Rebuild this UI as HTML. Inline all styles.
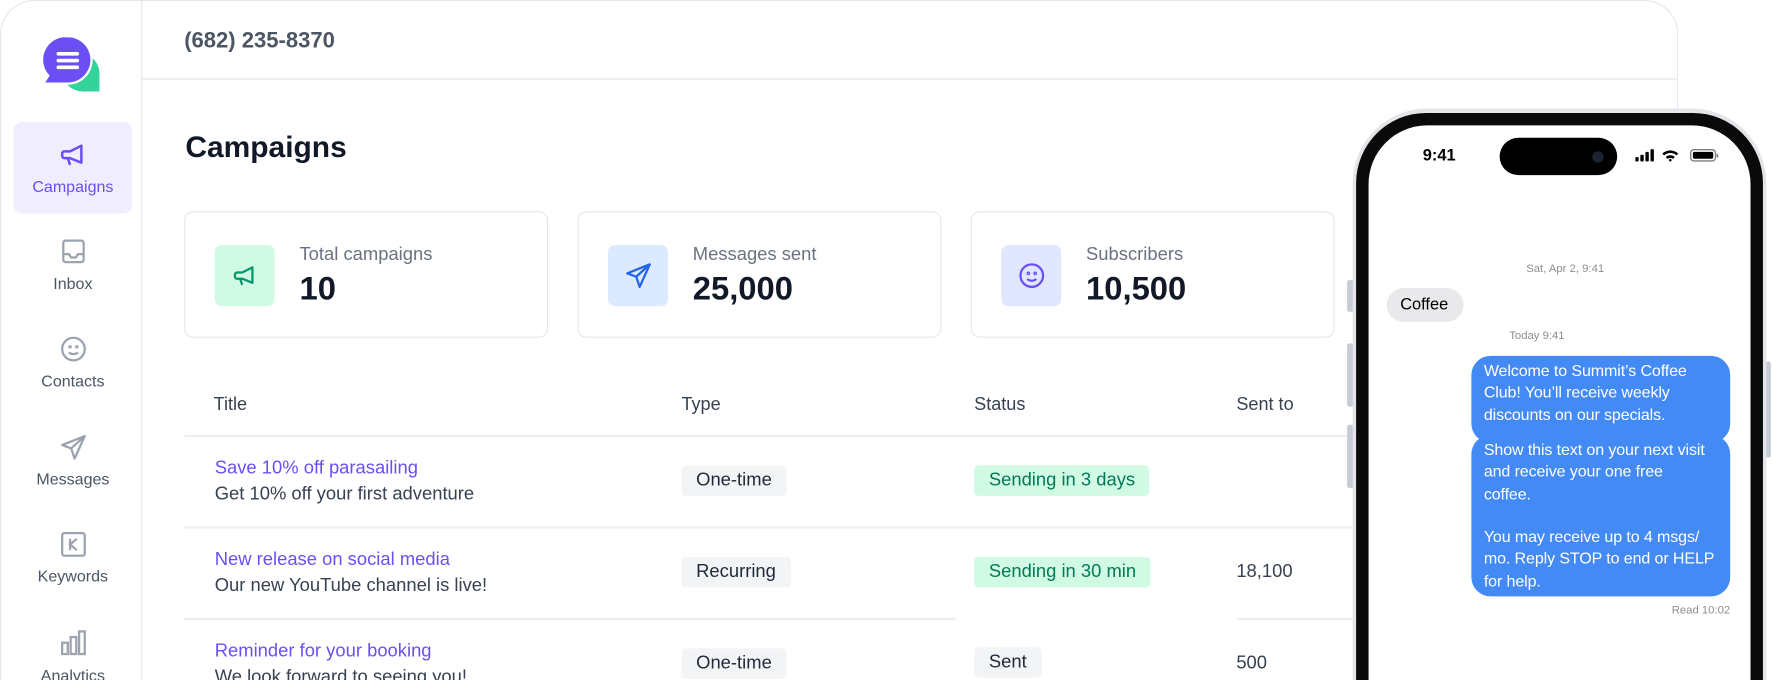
<!DOCTYPE html>
<html><head><meta charset="utf-8"><style>
*{box-sizing:border-box;margin:0;padding:0}
html,body{width:1772px;height:680px;overflow:hidden;background:#fff;font-family:"Liberation Sans",sans-serif}
#w{position:absolute;left:0;top:0;width:1568px;height:602px;overflow:hidden;transform:scale(1.1301,1.1296);transform-origin:0 0}
.a{position:absolute}
.card{left:0;top:0;width:1485px;height:602px;border:1.5px solid #e5e7eb;border-bottom:none;border-radius:30px 30px 0 0;background:#fff}
.side{left:125px;top:0;width:1px;height:602px;background:#e5e7eb}
.nav{left:12px;width:105px;text-align:center;font-size:14.2px;color:#4b5563}
.nav svg{display:block;margin:0 auto 10px}
.lbl{font-size:16.3px;color:#6b7280}
.val{font-size:29px;font-weight:bold;color:#111827}
.stat{top:187px;width:322px;height:112px;border:1.5px solid #e5e7eb;border-radius:8px}
.ib{left:26px;top:29px;width:53px;height:54px;border-radius:6px;display:flex;align-items:center;justify-content:center}
.th{top:350px;font-size:16px;color:#374151}
.ln{height:1.5px;background:#eceef1}
.t1{font-size:16.3px;color:#6a4ff6}
.t2{font-size:16.3px;color:#374151}
.bd{height:27px;line-height:27px;padding:0 13px;border-radius:4px;background:#f3f4f6;font-size:16.3px;color:#1f2937}
.gr{background:#d1fae5;color:#047857}
.msg{color:#fff;font-size:14.2px;line-height:19.3px;background:#448af5;border-radius:17px;padding:5px 4px 6px 11px;white-space:nowrap;letter-spacing:-0.1px}
</style></head><body><div id="w">
<div class="a card"></div>
<div class="a side"></div>
<svg class="a" style="left:38px;top:33px" width="54" height="50" viewBox="0 0 54 50">
<path d="M24 14a20 19 0 0 1 26 18v16h-12a20 19 0 0 1-14-34z" fill="#34d399"/>
<circle cx="22" cy="20" r="22" fill="#fff"/>
<path d="M22 0a20 20 0 0 1 0 40H2l4-6A20 20 0 0 1 22 0z" fill="#6c4ef5"/>
<rect x="12" y="13" width="20" height="3.2" rx="1.6" fill="#fff"/><rect x="12" y="19" width="20" height="3.2" rx="1.6" fill="#fff"/><rect x="12" y="25" width="20" height="3.2" rx="1.6" fill="#fff"/>
</svg>
<div class="a" style="left:12px;top:108px;width:105px;height:81px;background:#f0eefe;border-radius:8px"></div>
<div class="a nav" style="top:126px;color:#6a4ff6"><svg width="24" height="22" viewBox="0 0 24 22" fill="none" stroke="#6a4ff6" stroke-width="2.2" stroke-linejoin="round"><path d="M4 8h5l10-5v15l-10-4H4a2 2 0 0 1-2-2V10a2 2 0 0 1 2-2zM7 14l2 6"/></svg>Campaigns</div>
<div class="a nav" style="top:212px"><svg width="24" height="22" viewBox="0 0 24 22" fill="none" stroke="#9ca3af" stroke-width="2"><rect x="3" y="1" width="18" height="19" rx="2"/><path d="M3 13h5l2 3h4l2-3h5"/></svg>Inbox</div>
<div class="a nav" style="top:298px"><svg width="24" height="22" viewBox="0 0 24 22" fill="none" stroke="#9ca3af" stroke-width="2"><circle cx="12" cy="11" r="10"/><circle cx="9" cy="9" r=".6"/><circle cx="15" cy="9" r=".6"/><path d="M8 14c2 2 6 2 8 0"/></svg>Contacts</div>
<div class="a nav" style="top:385px"><svg width="24" height="22" viewBox="0 0 24 22" fill="none" stroke="#9ca3af" stroke-width="2" stroke-linejoin="round"><path d="M22 1L2 9l8 3 3 9zM22 1L10 12"/></svg>Messages</div>
<div class="a nav" style="top:471px"><svg width="24" height="22" viewBox="0 0 24 22" fill="none" stroke="#9ca3af" stroke-width="2"><rect x="2" y="1" width="20" height="20" rx="2"/><path d="M9 6v10M15 6l-6 5 6 5"/></svg>Keywords</div>
<div class="a nav" style="top:557px;height:45px;overflow:hidden"><svg width="24" height="24" viewBox="0 0 24 24" fill="none" stroke="#9ca3af" stroke-width="2"><rect x="2" y="12" width="5" height="10"/><rect x="9.5" y="7" width="5" height="15"/><rect x="17" y="2" width="5" height="20"/></svg>Analytics</div>
<div class="a" style="left:163px;top:25px;font-size:19.5px;font-weight:bold;color:#4b5563">(682) 235-8370</div>
<div class="a ln" style="left:126px;top:69px;width:1358px"></div>
<div class="a" style="left:164px;top:115px;font-size:26.5px;font-weight:bold;color:#111827">Campaigns</div>
<div class="a stat" style="left:163px"><div class="a ib" style="background:#d1fae5"><svg width="22" height="20" viewBox="0 0 24 22" fill="none" stroke="#059669" stroke-width="2.2" stroke-linejoin="round"><path d="M4 8h5l10-5v15l-10-4H4a2 2 0 0 1-2-2V10a2 2 0 0 1 2-2zM7 14l2 6"/></svg></div><div class="a lbl" style="left:101px;top:28px">Total campaigns</div><div class="a val" style="left:101px;top:52px">10</div></div>
<div class="a stat" style="left:511px"><div class="a ib" style="background:#dbeafe"><svg width="24" height="22" viewBox="0 0 24 22" fill="none" stroke="#2563eb" stroke-width="2" stroke-linejoin="round"><path d="M22 1L2 9l8 3 3 9zM22 1L10 12"/></svg></div><div class="a lbl" style="left:101px;top:28px">Messages sent</div><div class="a val" style="left:101px;top:52px">25,000</div></div>
<div class="a stat" style="left:859px"><div class="a ib" style="background:#e0e7ff"><svg width="24" height="22" viewBox="0 0 24 22" fill="none" stroke="#6a4ff6" stroke-width="2"><circle cx="12" cy="11" r="10"/><circle cx="9" cy="9" r=".6"/><circle cx="15" cy="9" r=".6"/><path d="M8 14c2 2 6 2 8 0"/></svg></div><div class="a lbl" style="left:101px;top:28px">Subscribers</div><div class="a val" style="left:101px;top:52px">10,500</div></div>
<div class="a th" style="left:189px">Title</div><div class="a th" style="left:603px">Type</div><div class="a th" style="left:862px">Status</div><div class="a th" style="left:1094px">Sent to</div>
<div class="a ln" style="left:163px;top:385px;width:1040px"></div>
<div class="a ln" style="left:163px;top:466px;width:1040px"></div>
<div class="a ln" style="left:163px;top:547px;width:683px"></div>
<div class="a ln" style="left:1095px;top:547px;width:110px"></div>
<div class="a t1" style="left:190px;top:405px">Save 10% off parasailing</div><div class="a t2" style="left:190px;top:428px">Get 10% off your first adventure</div>
<div class="a bd" style="left:603px;top:412px">One-time</div><div class="a bd gr" style="left:862px;top:412px">Sending in 3 days</div>
<div class="a t1" style="left:190px;top:486px">New release on social media</div><div class="a t2" style="left:190px;top:509px">Our new YouTube channel is live!</div>
<div class="a bd" style="left:603px;top:493px">Recurring</div><div class="a bd gr" style="left:862px;top:493px">Sending in 30 min</div><div class="a t2" style="left:1094px;top:497px">18,100</div>
<div class="a t1" style="left:190px;top:567px">Reminder for your booking</div><div class="a t2" style="left:190px;top:590px;height:12px;overflow:hidden">We look forward to seeing you!</div>
<div class="a bd" style="left:603px;top:574px">One-time</div><div class="a bd" style="left:862px;top:573px">Sent</div><div class="a t2" style="left:1094px;top:578px">500</div>
<div class="a" style="left:1192px;top:248px;width:6px;height:28px;background:#c8ccd4;border-radius:2px"></div>
<div class="a" style="left:1192px;top:304px;width:6px;height:56px;background:#c8ccd4;border-radius:2px"></div>
<div class="a" style="left:1192px;top:376px;width:6px;height:56px;background:#c8ccd4;border-radius:2px"></div>
<div class="a" style="left:1561px;top:320px;width:6px;height:85px;background:#c8ccd4;border-radius:2px"></div>
<div class="a" style="left:1197px;top:96px;width:366px;height:506px;border-radius:66px 66px 0 0;background:#e3e5e9"></div>
<div class="a" style="left:1200px;top:100px;width:360px;height:502px;border-radius:62px 62px 0 0;background:#0a0a0a"></div>
<div class="a" style="left:1211px;top:111px;width:338px;height:491px;border-radius:52px 52px 0 0;background:#fff"></div>
<div class="a" style="left:1327px;top:122px;width:104px;height:33px;border-radius:17px;background:#000"></div>
<div class="a" style="left:1409px;top:134px;width:10px;height:10px;border-radius:5px;background:#1b2333"></div>
<div class="a" style="left:1259px;top:130px;font-size:14.5px;font-weight:bold;color:#000">9:41</div>
<svg class="a" style="left:1447px;top:131px" width="74" height="14" viewBox="0 0 74 14">
<rect x="0" y="8" width="3" height="4" rx="1"/><rect x="4.5" y="6" width="3" height="6" rx="1"/><rect x="9" y="3.5" width="3" height="8.5" rx="1"/><rect x="13.5" y="1" width="3" height="11" rx="1"/>
<path d="M24 5a10 10 0 0 1 14 0l-1.5 1.6a8 8 0 0 0-11 0zM27 8a6 6 0 0 1 8 0l-1.5 1.6a4 4 0 0 0-5 0zM29.5 10.7l1.5-1.4 1.5 1.4-1.5 1.5z"/>
<rect x="49" y="1.5" width="22" height="10" rx="3" fill="none" stroke="#000" stroke-width="1.2" opacity=".5"/><rect x="51" y="3.5" width="18" height="6" rx="1.5"/><rect x="72" y="5" width="1.5" height="3.5" rx=".7" opacity=".5"/>
</svg>
<div class="a" style="left:1300px;top:233px;width:170px;text-align:center;font-size:10px;color:#8e8e93">Sat, Apr 2, 9:41</div>
<div class="a" style="left:1227px;top:255px;width:68px;height:30px;border-radius:15px;background:#e9e9eb;font-size:14.5px;line-height:30px;padding-left:12px;color:#000">Coffee</div>
<div class="a" style="left:1300px;top:292px;width:120px;text-align:center;font-size:10px;color:#8e8e93">Today 9:41</div>
<div class="a msg" style="left:1302px;top:315px;width:229px;height:77px">Welcome to Summit’s Coffee<br>Club! You’ll receive weekly<br>discounts on our specials.</div>
<div class="a msg" style="left:1302px;top:385px;width:229px;height:143px;padding-top:5px;line-height:19.3px">Show this text on your next visit<br>and receive your one free<br>coffee.<br><br>You may receive up to 4 msgs/<br>mo. Reply STOP to end or HELP<br>for help.</div>
<div class="a" style="left:1430px;top:535px;width:101px;text-align:right;font-size:10px;color:#8e8e93">Read 10:02</div>
</div></body></html>
